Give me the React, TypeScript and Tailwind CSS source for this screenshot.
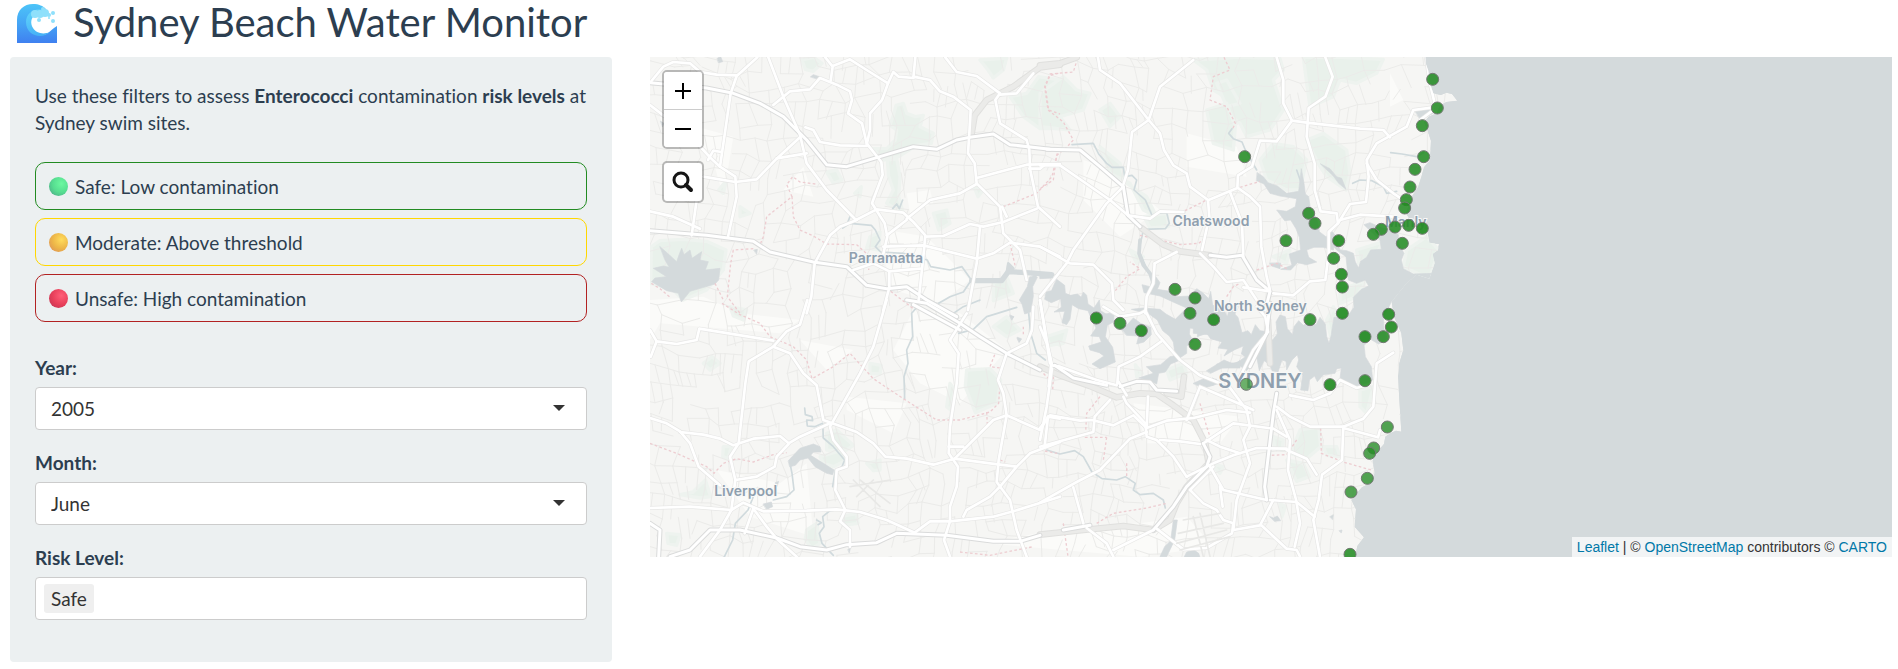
import React from "react";

type Point = [number, number];
type Marker = [number, number, number?];

/* ---------- Base map data: three map units per pixel ---------- */

const COAST =
  "M0 0H2355L2357 40 2365 62 2368 95 2380 130 2402 135 2420 128 2436 132 2452 152 2420 156 2400 166 2390 190 2366 200 2352 216 2362 240 2373 272 2370 330 2352 352 2345 378 2334 412 2318 436 2310 455 2298 490 2312 512 2330 522 2362 540 2368 578 2397 582 2394 600 2378 612 2384 640 2368 686 2330 674 2300 700 2255 755 2262 800 2284 850 2290 900 2278 940 2274 980 2280 1080 2284 1145 2268 1142 2250 1150 2236 1160 2232 1182 2206 1212 2198 1232 2204 1270 2190 1300 2166 1312 2150 1330 2134 1350 2148 1378 2144 1430 2160 1448 2172 1462 2152 1488 2144 1530H0Z";

const WATER: [number, number, string[]][] = [
  [0, 0, [
    "M60 590 85 612 110 635 118 612 125 595 132 614 150 600 156 625 185 605 180 630 205 635 196 660 240 655 236 690 225 702 150 724 124 756 115 730 80 722 35 695 45 684 80 680 40 655 70 648 88 652 75 630Z",
    "M232 25 242 20 248 35 236 38Z M342 600 352 598 350 612Z M512 80 520 74 538 80 530 86Z M62 214 72 220 68 230Z",
  ]],
  [0, 750, [
    "M445 482 480 445 520 432 540 440 543 456 520 456 512 466 582 510 578 524 560 520 525 500 504 474 480 480 466 496 450 500Z",
    "M370 612 394 606 398 620 380 628Z M1110 45 1122 50 1116 58Z M1132 115 1144 118 1138 126Z M624 748 632 742 628 758Z M406 548 416 544 412 558Z",
  ]],
  [1200, 0, [
    "M652 368 670 380 684 398 712 408 740 430 776 424 784 356 792 400 796 432 806 440 812 480 830 505 838 545 860 562 888 560 880 600 850 592 822 592 800 600 806 622 830 636 800 644 772 638 752 660 722 658 756 646 750 624 748 612 782 600 778 562 768 536 752 510 734 512 710 480 740 484 766 470 770 446 720 438 690 430 672 402 650 392Z",
    "M842 342 870 356 890 380 905 385 918 418 896 400 880 378Z",
    "M1125 182 1165 176 1180 190 1160 200 1142 210Z",
    "M690 640 695 648 720 656 722 640Z",
    "M0 668 34 670 40 684 0 686Z",
  ]],
  [1620, 450, [
    "M760 220 700 222 670 206 664 180 672 160 655 130 655 104 640 90 606 84 570 68 552 74 566 88 600 120 604 148 572 150 560 172 542 184 536 204 526 186 520 160 500 152 480 150 470 110 452 90 440 110 448 124 470 150 498 170 505 240 530 250 556 240 566 258 544 268 520 292 522 322 502 350 462 352 456 388 454 404 447 430 440 410 436 372 420 352 408 374 390 366 370 376 356 362 342 380 338 404 322 386 316 350 300 345 288 366 292 402 278 420 262 412 254 394 240 392 226 374 214 404 204 392 186 398 174 352 158 336 152 352 130 346 122 374 92 370 40 360 40 400 88 404 96 392 126 400 134 424 148 440 132 468 162 450 190 438 184 462 196 470 172 488 110 492 116 504 150 502 172 492 200 512 222 480 230 470 238 512 252 482 270 494 276 512 294 516 306 480 318 484 320 510 336 480 352 464 356 480 350 500 368 526 362 570 384 572 388 540 404 528 412 545 430 524 465 520 470 506 484 504 480 536 500 548 530 560 556 552 578 540 574 500 556 470 552 436 572 418 596 432 622 416 612 386 610 350 626 322 635 303 760 300Z",
    "M40 550 76 534 110 538 100 556 60 560Z",
  ]],
  [900, 570, [
    "M285 106 292 112 278 140 280 168 272 216 254 222 246 192 238 180 262 140 268 112Z",
    "M350 118 374 136 376 160 392 166 412 162 424 172 430 156 440 166 444 192 462 204 478 180 482 212 498 222 524 216 520 246 502 256 496 290 518 322 526 366 480 386 456 372 492 348 478 338 450 330 446 318 484 306 478 290 452 288 468 264 452 232 444 212 416 206 396 194 390 238 380 254 366 248 374 214 342 216 364 202 362 176 334 188 314 178 318 156 334 152Z",
    "M540 262 560 256 580 234 602 250 632 262 634 284 612 306 590 312 596 288 560 286Z",
    "M640 100 660 128 652 148 690 154 710 170 750 168 770 146 790 160 806 176 812 154 818 196 850 206 862 230 868 206 886 216 880 244 900 260V318L880 330 834 324 846 306 812 296 800 280 772 290 774 268 750 264 748 282 760 304 740 318 740 340 716 356 704 332 700 306 688 288 668 272 652 240 630 224 574 208 610 204 660 208 678 222 706 238 740 204 704 188 660 168 612 158 606 134 630 140Z",
    "M620 380 662 374 690 350 712 346 716 362 692 372 676 396 656 400 650 432 626 420 596 414 640 400Z",
    "M800 392 852 360 880 372 900 362V384L846 384 812 400Z",
    "M780 430 818 414 838 430 800 442Z",
    "M232 292 244 296 238 306Z M210 228 220 230 216 240Z",
  ]],
  [1200, 750, [
    "M392 722 400 660 412 660 404 720 380 770 360 770 374 740Z",
    "M432 772 440 756 462 750 476 760 480 772Z",
    "M690 650 700 654 712 648 722 662 704 664Z M870 650 880 644 878 658Z M898 692 906 690 904 698Z",
  ]],
];

const STREAMS: [number, number, string[]][] = [
  [0, 0, [
    "M608 534 630 520 694 526 706 540 720 570 706 590 722 606 790 610 862 630 872 650 930 660 966 650 994 690 970 726 930 740 896 760 M630 500 622 520",
    "M758 476 770 462 778 476 788 450",
    "M940 790 970 770 1020 750",
  ]],
  [0, 750, [
    "M832 20 815 40 818 110 800 150 804 190 792 230 794 296",
    "M494 324 496 344 516 350 518 362 500 360 502 378 524 380 548 370 550 414 580 440 614 480 606 500 586 510 578 560",
    "M450 490 456 520 462 570 440 590 400 600 M340 590 324 630 286 670 278 720 252 772",
    "M604 628 570 632 548 650 552 680 538 700 546 730 580 766 M530 660 544 668 534 674",
    "M956 100 1000 88 1040 50 1060 44 1130 22 M1166 40 1172 100 1190 160 1216 180",
  ]],
  [1200, 0, [
    "M96 284 160 280 176 312 200 340 216 352 250 352 254 380 276 376 290 390 282 420 316 450 336 496 350 490 380 488 388 520 376 536 310 538 306 560 296 600 326 670",
    "M576 236 566 250 580 266 606 276 616 300 650 360",
    "M1052 308 1086 312 1130 320 1150 308",
    "M938 400 960 390 996 392 1030 410 1040 430 1070 424 M770 360 784 400",
  ]],
  [1200, 750, [
    "M20 450 60 462 104 452 130 470 156 516 186 536 230 540 256 530 286 550 280 570 300 584 340 580 370 600 376 624",
  ]],
];

const PARKS: [number, number, string[]][] = [
  [0, 0, [
    "M34 590 60 572 130 568 200 574 258 600 250 660 200 720 130 750 100 720 32 700Z",
    "M768 166 790 160 800 190 826 200 850 196 840 230 880 250 874 280 830 286 776 320 730 330 700 296 740 296 766 270 770 240 750 226 760 196Z",
    "M742 330 770 326 780 380 776 440 790 490 740 460 760 420 746 380Z",
    "M1020 30 1100 24 1090 60 1060 84 1044 60Z",
    "M1196 80 1260 90V236H1200L1150 200 1110 140 1160 130Z",
    "M486 30 520 22 546 40 520 64 496 58Z",
    "M560 366 590 360 606 390 580 400Z M644 430 664 410 660 440Z M880 490 920 480 930 520 896 540Z",
    "M1060 700 1100 680 1120 730 1060 752Z M690 560 720 546 716 600 680 594Z",
    "M300 470 330 490 300 500Z M260 390 250 430 236 420Z M1000 406 1030 420 1014 440Z",
  ]],
  [0, 750, [
    "M980 210 1050 206 1082 240 1072 310 1006 338 976 260Z",
    "M560 400 590 390 640 436 610 456 560 450Z",
    "M540 470 610 450 620 480 580 500 550 490Z",
    "M500 690 530 670 540 730 516 746 496 720Z M604 650 650 640 654 670 610 676Z",
    "M190 190 216 170 240 190 210 210Z M690 190 724 196 720 222 690 220Z M680 490 720 480 720 510 700 512Z",
    "M120 584 160 576 196 540 212 590 180 594Z M80 700 120 704 110 736 84 730Z M250 440 274 440 264 476 248 470Z M270 20 320 30 310 60 280 48Z",
    "M1060 80 1100 50 1140 90 1100 110Z M930 250 944 270 932 330 920 320Z M1225 120 1260 106 1260 136Z",
  ]],
  [1200, 0, [
    "M0 130 70 80 110 120 150 130 130 180 60 200 90 240 0 230Z",
    "M180 180 210 160 240 200 210 230Z",
    "M460 30 600 22 720 26 730 60 700 90 730 180 690 240 620 260 600 220 560 190 570 150 520 120 500 60Z",
    "M500 180 560 160 586 230 580 300 520 280Z M530 100 560 90 600 160 560 170Z",
    "M790 22 900 22 1030 28 1010 70 950 100 900 90 880 140 810 170 800 100Z",
    "M800 270 850 250 920 300 930 370 918 420 860 380 840 350Z M660 330 700 280 760 290 800 330 780 420 740 420 680 390Z",
    "M180 290 240 340 260 400 320 440 350 500 310 480 270 400 210 370Z",
    "M1100 600 1160 560 1196 600 1168 686 1090 650Z M950 600 1030 575 1010 610 956 640Z",
    "M270 600 310 620 290 640Z M900 720 980 690 950 740 900 760Z M700 620 750 600 740 640Z M312 500 380 490 386 530 330 534Z",
  ]],
  [1200, 750, [
    "M780 390 836 380 842 440 800 476 752 460Z",
    "M740 480 790 490 808 530 770 544Z M700 410 730 420 726 450 704 440Z",
    "M380 210 430 190 440 220 390 240Z M960 270 1000 260 980 340 960 320Z M514 492 550 500 540 520Z",
    "M20 110 80 90 70 130 30 136Z M860 60 880 20 900 60 876 124Z M286 194 306 220 290 230Z M720 610 736 620 726 650Z M850 440 890 440 900 470 860 466Z",
  ]],
];

const CLEARINGS =
  "M30 750 190 740 300 790 480 810 420 850 60 820 30 870Z M60 200 280 260 250 440 210 300 90 290Z M820 780 960 790 1100 900 960 1060 840 1000 760 900Z M430 420 490 350 520 440Z M800 430 870 420 880 460 810 490Z M740 540 860 560 990 690 900 760 760 720 730 620Z M1330 330 1420 360 1560 480 1440 560 1330 450Z M1040 1480 1240 1440 1500 1420 1640 1400 1720 1490 1500 1520Z M1480 1060 1800 1100 1740 1180 1520 1180Z M230 1260 420 1300 500 1240 520 1460 330 1400Z M620 1040 800 1060 760 1150 620 1080Z M2250 70 2290 150 2250 170Z M1640 250 1790 290 1820 380 1640 350Z M480 870 640 900 560 960Z";

const BOUNDARIES: [number, number, string[]][] = [
  [0, 0, [
    "M526 402 480 396 458 380 440 404 456 440 380 500 370 560 362 580 M456 440 460 500 480 540 520 558 560 582 650 584 690 620 686 660",
    "M340 596 280 600 272 640 262 740 300 790 M225 700 250 750 M752 724 820 776",
    "M1255 70 1230 76 1216 110 1226 180 1260 192 M1252 310 1236 380 1190 430 1090 470 M1110 580 1126 650",
    "M34 700 60 716 90 742",
  ]],
  [0, 750, [
    "M246 10 300 44 360 70 390 110 460 140 500 180 516 236 580 200 630 160 700 236 790 296 890 360 960 360 1050 336 1076 310 1080 250",
    "M30 430 110 460 200 500 222 520 250 490 290 476 340 486 400 464 440 458 M1064 164 1050 200 1080 204 M1040 336 1042 372 M960 756 1050 766 1180 740",
    "M1080 480 1096 486 M1200 210 1230 240 M1150 80 1150 110",
  ]],
  [1200, 0, [
    "M108 40 100 66 30 72 14 110 24 180 70 216 100 270 80 292 50 316 40 390 0 416",
    "M552 22 570 60 520 80 510 150 560 170 586 220 576 240 M390 488 440 480 500 450 M600 412 660 394",
    "M300 556 420 584 476 580 500 560 M226 722 260 680 300 656 270 636 M650 660 710 640 740 656 M560 740 580 710 600 700",
  ]],
  [1200, 750, [
    "M180 290 140 340 136 412 200 412 M40 230 38 270 M0 450 60 462 M200 412 190 480 M260 490 260 530",
    "M170 670 220 640 320 624 380 610 M480 310 500 380 510 410 M770 420 740 464 690 466 M842 384 844 460 910 486 1000 512 M70 670 84 770",
  ]],
];

const ROADS: [number, number, string[]][] = [
  [0, 0, [
    "M352 22 310 60 290 78 272 130 240 350 286 380 290 440 264 560",
    "M32 96 70 50 100 36 150 40 180 66 230 74 290 76",
    "M385 22 430 140 480 255 500 340 560 420 648 510 710 478 790 488 820 516 856 556 850 620 836 750",
    "M400 165 450 124 510 118 540 84 590 104 630 124 636 150 624 190 666 220 680 280 724 336 728 374 696 460 734 520 742 560 728 620",
    "M556 22 578 50 572 92 M578 48 630 28 680 60 744 100 760 66 776 80 820 84 826 22 M820 80 870 90 900 124 940 140 992 180 988 250 984 310 1004 340 1010 400 1080 470 1090 550 1140 600 1160 690",
    "M744 100 726 150 690 190 690 240 680 284",
    "M410 325 500 310 M30 165 70 196 130 240 190 300 208 320 240 350 M204 330 220 302 244 306",
    "M496 232 520 240 540 276 600 286 680 288",
    "M190 380 286 396 350 388 410 326 480 262",
    "M916 22 950 66 1010 78 1080 130 1066 150 1080 220 1160 270 1168 300 1170 356 1194 470 1260 530",
    "M1080 134 1130 130 1180 70",
    "M1010 384 1160 344 1260 342 M1168 356 1200 356 1214 344",
    "M800 506 870 450 960 430 1010 402",
    "M740 556 800 510 M730 590 850 586 1010 626 1060 610 1110 578 1200 590 1260 620",
    "M856 560 910 558 950 540 990 522 1030 530 1090 516 1190 476",
    "M1086 470 1100 500 M1020 530 1010 640 984 780",
    "M650 510 600 530 570 556 524 640 514 740 500 790",
    "M170 450 155 556 M640 660 700 640 748 664 840 656 M748 664 748 712 730 780",
    "M30 484 100 500 180 536",
  ]],
  [0, 750, [
    "M30 90 50 124 110 132 170 120 178 86 400 122",
    "M50 124 32 170 M502 0 480 74 440 94 400 140 326 184 316 250 296 430 270 470 286 540 274 630 240 690 180 770",
    "M400 140 450 160 490 220 530 256 550 360 650 396 700 430 736 470 800 476 880 494 944 476 1000 420 1060 360 1100 346 1200 390 1224 350 1260 356",
    "M740 0 700 140 660 220 570 380 580 420 620 470 620 500 590 510 586 570 616 630 600 664 630 690 630 740",
    "M120 396 190 404 240 416 280 436 340 416 420 408 446 430 480 410 570 370 M446 432 410 470 404 500 350 530 286 540",
    "M30 354 80 370 120 394 150 430 176 500 240 556",
    "M30 624 150 620 274 630 310 608 370 634 500 632 590 628 660 636 740 660 824 698",
    "M340 626 314 700 M340 626 380 680 410 716 470 770",
    "M824 698 870 664 930 664 1060 650 1120 634 1260 590",
    "M980 40 930 120 956 160 950 250 930 380 926 460 954 500 950 560 930 620 930 664 912 720 930 770",
    "M1100 160 1074 240 1090 280 1100 346 1076 480 1070 546 1110 600 1130 690 1160 770",
    "M926 440 970 440 M944 476 1050 490 1130 500 1170 460 1260 426 M1130 500 1080 560 1050 590 980 630 970 650 M1224 350 1214 440",
    "M1100 160 1160 130 1176 90 1180 20 M1200 0 1220 120 1234 190 1226 260",
  ]],
  [1200, 0, [
    "M174 22 180 60 240 100 326 210 360 250 372 300 400 346 440 370 450 410 504 450 508 500 486 600",
    "M326 210 276 246 264 360 248 410 M326 210 360 110 460 30",
    "M0 346 60 346 210 450 264 496 M250 410 200 460 100 600 80 640 0 740 M0 590 90 640 160 644 216 700 220 750 250 780",
    "M710 22 730 90 730 160 756 212 800 218 960 236 1030 240 1050 262 M856 22 878 80 856 140 806 174 800 260 824 340 824 420 842 484 890 490 894 520",
    "M756 212 710 274 660 272 636 350 594 376 592 414 506 450",
    "M1180 172 1120 180 1100 230 1010 280 980 330 986 380 978 456 930 462 894 520 866 546 866 610 856 690 810 694 760 736 700 730",
    "M980 340 1010 390 1060 430 1090 450 M900 510 960 494 1060 500 1100 520",
    "M594 414 630 440 660 470 664 590 680 680 690 720 M570 426 606 520 610 620",
    "M264 496 330 506 360 484 430 486 M480 610 520 650 560 696 610 690 650 750 M344 640 340 700 320 740 316 790",
    "M344 640 410 606 M610 712 690 724",
    "M1158 22 1170 100 1184 160 M1180 180 1140 210",
  ]],
  [1200, 750, [
    "M0 80 20 130 36 196 60 200 170 240 230 256 M0 0 30 190 M190 20 240 50 300 40 316 32 350 100 420 180 480 226 540 250",
    "M232 250 236 200 300 170 364 124 M236 246 260 286 M36 206 20 320 0 420",
    "M600 230 640 150 684 96 676 50 650 20",
    "M0 384 30 346 120 362 156 360 220 376 280 346 320 384 380 362 460 354 560 330 630 338",
    "M250 290 260 310 316 370 320 410 350 420 400 470 440 530",
    "M0 440 160 396 164 350 210 300 M320 396 270 416 180 510 110 546 0 608 M100 562 130 670 M360 420 420 424 480 432",
    "M440 530 520 490 580 466 650 444 740 446 M500 420 540 440 600 460 M490 430 580 370 700 386 740 410",
    "M710 320 750 350 810 380 910 380 970 356 1000 320 1010 190 1060 158 M750 286 820 300 870 280 900 240 950 264 980 256",
    "M910 380 906 480 846 524 836 600 820 660 840 770 M910 384 1014 412 1020 390",
    "M710 330 750 420 744 510 770 606 824 650 M740 450 800 476 830 524 M770 606 690 600",
    "M480 260 440 360 M480 260 550 290 640 330 M560 250 620 330 630 380 610 420 630 490 590 600 580 690",
    "M510 500 550 570 680 600 M700 600 660 676 580 690 M664 676 740 746 770 750 780 770 M540 560 548 620",
    "M520 500 450 570 490 610 530 630 550 660 580 670 576 700 500 744 430 748 350 686",
    "M140 684 200 730 220 770 M340 690 220 750 M770 610 780 670 764 740 M320 384 324 290",
  ]],
];

const HIGHWAYS: [number, number, string[]][] = [
  [0, 0, [
    "M30 98 200 114 280 130 360 160 430 200 500 270 560 344 620 350 720 320 820 290 890 298 950 270 990 262 1060 252 1110 284 1230 298",
    "M30 542 200 556 340 574 390 606 520 636 620 650 680 706 740 716 800 710 860 750 950 800",
  ]],
  [1200, 0, [
    "M20 298 120 300 180 350 250 410 264 496 300 530 M510 616 560 622 606 616 650 690 690 724 676 780",
  ]],
  [0, 750, [
    "M800 0 860 10 960 70 1020 110 1100 160 1200 210 M820 14 960 90",
    "M90 770 150 750 210 690 300 690 410 714 480 740 560 750 620 734 710 728 770 700 920 706 1060 724 1140 724 1200 706",
    "M30 670 60 690 56 770",
  ]],
  [1200, 750, [
    "M44 196 100 234 200 256 M70 690 150 676 M680 600 674 560 700 340 710 280 M340 690 400 620 440 560 500 500 510 470 490 430 M690 10 680 100 630 200",
    "M240 260 290 244 330 246 350 270 410 274",
  ]],
];

const TUNNELS: [number, number, string[]][] = [
  [0, 0, ["M1260 44 1200 52 1120 110 1040 150 1004 196 994 256"]],
  [1200, 0, ["M0 46 60 40 110 22 M304 534 370 584 420 604 510 616"]],
  [1200, 750, [
    "M0 200 60 226 150 258 230 292 300 280 350 282 400 316 460 360 496 430 506 490 440 560 410 610 390 660 340 690 250 678 130 690 0 704",
    "M684 60 690 190 M700 270 M380 280 424 290 432 230",
  ]],
];

const MARKERS: [number, number, Marker[]][] = [
  [1200, 0, [
    [1178, 88], [1192, 174], [1147, 227], [614, 320], [1151, 320], [1125, 358], [1110, 411], [1099, 449],
    [1094, 474], [806, 490], [825, 520], [1106, 526], [1147, 535, 0.92], [1065, 531], [1024, 538], [1000, 553],
    [738, 572], [896, 572, 0.92], [1087, 580], [881, 625], [904, 673, 0.92], [907, 711, 0.92], [405, 718], [465, 744],
  ]],
  [1200, 750, [
    [450, 40], [521, 59, 0.92], [810, 59], [907, 40, 0.92], [1046, 43, 0.92], [1054, 81, 0.92], [975, 110, 0.92],
    [1030, 110], [169, 54, 0.92], [240, 70], [304, 92, 0.92], [465, 133], [619, 253, 0.65], [870, 254, 0.92],
    [975, 242], [1042, 381, 0.78], [1001, 444, 0.78], [989, 460, 0.78], [982, 535, 0.78], [933, 576, 0.78], [930, 763],
  ]],
];

const PLACES = [
  { name: "Parramatta", x: 738, y: 640, size: 42 },
  { name: "Chatswood", x: 1713, y: 528, size: 42 },
  { name: "Manly", x: 2297, y: 530, size: 42 },
  { name: "North Sydney", x: 1861, y: 782, size: 42 },
  { name: "Liverpool", x: 317, y: 1338, size: 42 },
  { name: "SYDNEY", x: 1860, y: 1015, size: 60 },
];

/* Irregular street mesh: a jittered grid whose nodes are joined to their neighbours. */
function buildStreets(): string {
  let seed = 7;
  const random = () => {
    seed = (seed * 1103515245 + 12345) % 2147483648;
    return seed / 2147483648;
  };
  const step = 50;
  const cols = 50;
  const rows = 34;
  const nodes: Point[][] = [];
  for (let r = 0; r < rows; r++) {
    const row: Point[] = [];
    for (let c = 0; c < cols; c++) {
      const x = c * step - 20;
      const y = r * step - 60;
      row.push([
        Math.round(x + 26 * Math.sin(y / 170) + 14 * Math.sin(x / 90) + (random() - 0.5) * 30),
        Math.round(y + 34 * Math.sin(x / 210) + (random() - 0.5) * 30),
      ]);
    }
    nodes.push(row);
  }
  const parts: string[] = [];
  for (let r = 0; r < rows - 1; r++) {
    for (let c = 0; c < cols - 1; c++) {
      const [x, y] = nodes[r][c];
      const right = nodes[r][c + 1];
      const below = nodes[r + 1][c];
      if (random() < 0.7) parts.push(`M${x} ${y}L${right[0]} ${right[1]}`);
      if (random() < 0.7) parts.push(`M${x} ${y}L${below[0]} ${below[1]}`);
      if (random() < 0.2) parts.push(`M${(x + right[0]) / 2} ${(y + right[1]) / 2}L${below[0] + 25} ${below[1]}`);
    }
  }
  return parts.join("");
}

const STREETS = buildStreets();

function Layer({ data, ...props }: { data: [number, number, string[]][] } & React.SVGProps<SVGGElement>) {
  return (
    <g {...props}>
      {data.map(([dx, dy, paths], i) => (
        <g key={i} transform={`translate(${dx} ${dy})`}>
          {paths.map((d, j) => (
            <path key={j} d={d} />
          ))}
        </g>
      ))}
    </g>
  );
}

function BaseMap() {
  return (
    <svg
      className="block h-full w-full"
      viewBox="30 21 3726 1500"
      preserveAspectRatio="xMidYMid slice"
      role="img"
      aria-label="Map of Sydney swim sites"
    >
      <defs>
        <clipPath id="land">
          <path d={COAST} />
        </clipPath>
      </defs>
      <rect x="-1000" y="-1000" width="6000" height="4000" fill="#d4dadc" />
      <g clipPath="url(#land)" strokeLinejoin="round" strokeLinecap="round">
        <path d={COAST} fill="#f6f6f4" />
        <path d={CLEARINGS} fill="#fbfbf9" />
        <Layer data={PARKS} fill="#e9f1eb" stroke="#eef3ef" strokeWidth="10" />
        <path d={STREETS} fill="none" stroke="#ebebe9" strokeWidth="3" />
        <Layer data={STREAMS} fill="none" stroke="#d0dadd" strokeWidth="5" />
        <Layer data={WATER} fill="#d4dadc" stroke="#d4dadc" strokeWidth="2" />
        <path d="M995 692 1085 692 1105 665 1160 668 1235 674" fill="none" stroke="#d4dadc" strokeWidth="16" />
        <path d="M1105 640 1120 655 1100 670Z" fill="#d4dadc" stroke="#d4dadc" strokeWidth="8" />
        <path d="M1500 570 1497 610 1510 645 1530 670 1540 700" fill="none" stroke="#d4dadc" strokeWidth="11" />
        <Layer
          data={BOUNDARIES}
          fill="none"
          stroke="#edcdd1"
          strokeWidth="4"
          strokeLinecap="butt"
          strokeDasharray="8 7"
        />
        <Layer data={TUNNELS} fill="none" stroke="#e0e0de" strokeWidth="20" />
        <Layer data={TUNNELS} fill="none" stroke="#ebebe9" strokeWidth="14" />
        <Layer data={ROADS} fill="none" stroke="#e7e7e6" strokeWidth="12" />
        <Layer data={HIGHWAYS} fill="none" stroke="#dadbdb" strokeWidth="15" />
        <Layer data={ROADS} fill="none" stroke="#ffffff" strokeWidth="8" />
        <Layer data={HIGHWAYS} fill="none" stroke="#ffffff" strokeWidth="9" />
        {/* Airport runways */}
        <path
          d="M1610 1480 1760 1440M1620 1500 1770 1460M1660 1400 1690 1520M1680 1390 1710 1520M1630 1410 1740 1390M1615 1450 1750 1420M640 1290 720 1370M660 1290 750 1360M630 1310 750 1290M650 1340 700 1290"
          fill="none"
          stroke="#e8e8e6"
          strokeWidth="5"
        />
      </g>
      <g
        fill="#8f9fae"
        stroke="#f8f8f7"
        strokeWidth="6"
        paintOrder="stroke"
        textAnchor="middle"
        className="font-['Inter',sans-serif] font-semibold"
      >
        {PLACES.map((p) => (
          <text key={p.name} x={p.x} y={p.y} fontSize={p.size}>
            {p.name}
          </text>
        ))}
      </g>
      {MARKERS.map(([dx, dy, items], i) => (
        <g key={i} transform={`translate(${dx} ${dy})`} fill="#228b22" stroke="#737873" strokeWidth="3">
          {items.map(([x, y, opacity = 0.87], j) => (
            <circle key={j} cx={x} cy={y} r="18" fillOpacity={opacity} />
          ))}
        </g>
      ))}
    </svg>
  );
}

function WaveIcon() {
  return (
    <svg className="size-10 shrink-0" viewBox="0 0 40 40" aria-hidden="true">
      <defs>
        <linearGradient id="wave" x1="0" y1="0" x2="0" y2="1">
          <stop offset="0" stopColor="#4cc4f8" />
          <stop offset="0.5" stopColor="#45a5f5" />
          <stop offset="1" stopColor="#3f80f0" />
        </linearGradient>
        <linearGradient id="curl" x1="0" y1="0" x2="0.4" y2="1">
          <stop offset="0" stopColor="#62d6fb" />
          <stop offset="1" stopColor="#46b2f6" />
        </linearGradient>
      </defs>
      <path
        d="M0 40V17C0 7 7 1 16 1c6 0 10 2 13 5l-1 6-12 1c-3 3-4 8-2 13 3 6 11 8 17 4 3-2 5-5 9-7v17Z"
        fill="url(#wave)"
      />
      <path
        d="M27 7c-8-3-18 2-18 12 0 9 7 14 14 14 4 0 8-2 10-4-7 3-14 1-17-4s-2-10 2-13Z"
        fill="url(#curl)"
      />
      <g fill="#8fe0fb">
        <circle cx="18" cy="11" r="4" />
        <circle cx="23" cy="11" r="4" />
        <circle cx="28" cy="10" r="4" />
        <circle cx="26" cy="6" r="2" />
        <circle cx="32" cy="12" r="2" />
        <circle cx="36" cy="10" r="2" />
        <circle cx="36" cy="18" r="2" />
        <circle cx="22" cy="17" r="2" />
        <circle cx="32" cy="15" r="1" />
      </g>
    </svg>
  );
}

const RISKS = [
  {
    text: "Safe: Low contamination",
    border: "border-[#228b22]",
    ball: "bg-[radial-gradient(circle_at_65%_35%,#6cf8a0,#56dd90_50%,#4a9c86)]",
  },
  {
    text: "Moderate: Above threshold",
    border: "border-[#ffd700]",
    ball: "bg-[radial-gradient(circle_at_65%_35%,#ffdc5c,#edb648_50%,#d98a5a)]",
  },
  {
    text: "Unsafe: High contamination",
    border: "border-[#b22222]",
    ball: "bg-[radial-gradient(circle_at_65%_35%,#ff5f78,#e8405a_50%,#b83050)]",
  },
];

function SelectField({ id, label, options, value }: { id: string; label: string; options: string[]; value: string }) {
  return (
    <div className="flex flex-col gap-1.5">
      <label htmlFor={id} className="font-bold">
        {label}
      </label>
      <div className="relative">
        <select
          id={id}
          defaultValue={value}
          className="block h-[43px] w-full appearance-none rounded border border-[#cccccc] bg-white pl-[15px] text-[#333333]"
        >
          {options.map((o) => (
            <option key={o}>{o}</option>
          ))}
        </select>
        <svg
          className="pointer-events-none absolute top-[18px] right-[22px] h-1.5 w-3"
          viewBox="0 0 12 6"
          aria-hidden="true"
        >
          <path d="M0 0H12L6 6Z" fill="#333333" />
        </svg>
      </div>
    </div>
  );
}

export default function App() {
  return (
    <div className="pr-1.5 pl-2.5 font-['Lato',sans-serif] text-[19px] leading-[27px] text-[#2c3e50] [font-variant-ligatures:no-common-ligatures]">
      <header className="flex h-[57px] items-start gap-4 pt-[3px] pl-[7px]">
        <WaveIcon />
        <h1 className="text-[40px] leading-[38px]">Sydney Beach Water Monitor</h1>
      </header>

      <main className="grid grid-cols-[602fr_1242fr] items-start gap-[38px]">
        <form className="rounded bg-[#ecf0f1] px-[25px] pt-[25px] pb-[42px]">
          <p className="-mr-4">
            Use these filters to assess <strong>Enterococci</strong> contamination <strong>risk levels</strong> at
            Sydney swim sites.
          </p>

          <ul className="mt-[26px] flex flex-col gap-2">
            {RISKS.map((risk) => (
              <li
                key={risk.text}
                className={`flex h-12 items-center gap-[7px] rounded-[10px] border px-[13px] ${risk.border}`}
              >
                <span className={`size-[19px] rounded-full ${risk.ball}`} />
                {risk.text}
              </li>
            ))}
          </ul>

          <div className="mt-8 flex flex-col gap-[19px]">
            <SelectField id="year" label="Year:" value="2005" options={["2004", "2005", "2006"]} />
            <SelectField id="month" label="Month:" value="June" options={["May", "June", "July"]} />
            <div className="flex flex-col gap-1.5">
              <label htmlFor="risk" className="font-bold">
                Risk Level:
              </label>
              <div className="flex h-[43px] items-center gap-1 rounded border border-[#cccccc] bg-white px-2 text-[#333333]">
                <span className="rounded-[3px] bg-[#efefef] px-[7px] py-px">Safe</span>
                <input id="risk" type="text" className="min-w-0 flex-1 bg-transparent outline-none" />
              </div>
            </div>
          </div>
        </form>

        <section className="relative h-[500px] overflow-hidden bg-[#d4dadc]">
          <BaseMap />
          <div className="absolute top-[13px] left-3 flex flex-col gap-3">
            <div className="w-[42px] rounded-[5px] border-2 border-black/25 bg-clip-padding">
              <button
                type="button"
                aria-label="Zoom in"
                className="flex h-[38px] w-full items-center justify-center rounded-t-[3px] border-b border-[#cccccc] bg-white"
              >
                <svg className="size-4" viewBox="0 0 16 16" aria-hidden="true">
                  <path d="M8 0V16M0 8H16" stroke="#000000" strokeWidth="2" />
                </svg>
              </button>
              <button
                type="button"
                aria-label="Zoom out"
                className="flex h-[37px] w-full items-center justify-center rounded-b-[3px] bg-white"
              >
                <svg className="size-4" viewBox="0 0 16 16" aria-hidden="true">
                  <path d="M0 8H16" stroke="#000000" strokeWidth="2" />
                </svg>
              </button>
            </div>
            <button
              type="button"
              aria-label="Search"
              className="flex size-[42px] items-center justify-center rounded-[5px] border-2 border-black/25 bg-white bg-clip-padding"
            >
              <svg className="size-[22px]" viewBox="0 0 22 22" fill="none" aria-hidden="true">
                <circle cx="9" cy="9" r="7" stroke="#151515" strokeWidth="3" />
                <path d="M14 14L19 19" stroke="#151515" strokeWidth="4" strokeLinecap="round" />
              </svg>
            </button>
          </div>
          <p className="absolute right-0 bottom-0 bg-white/70 px-[5px] font-['Liberation_Sans',sans-serif] text-sm leading-5 text-[#333333]">
            <a href="#leaflet" className="text-[#0078a8]">
              Leaflet
            </a>{" "}
            | ©{" "}
            <a href="#openstreetmap" className="text-[#0078a8]">
              OpenStreetMap
            </a>{" "}
            contributors ©{" "}
            <a href="#carto" className="text-[#0078a8]">
              CARTO
            </a>
          </p>
        </section>
      </main>
    </div>
  );
}
